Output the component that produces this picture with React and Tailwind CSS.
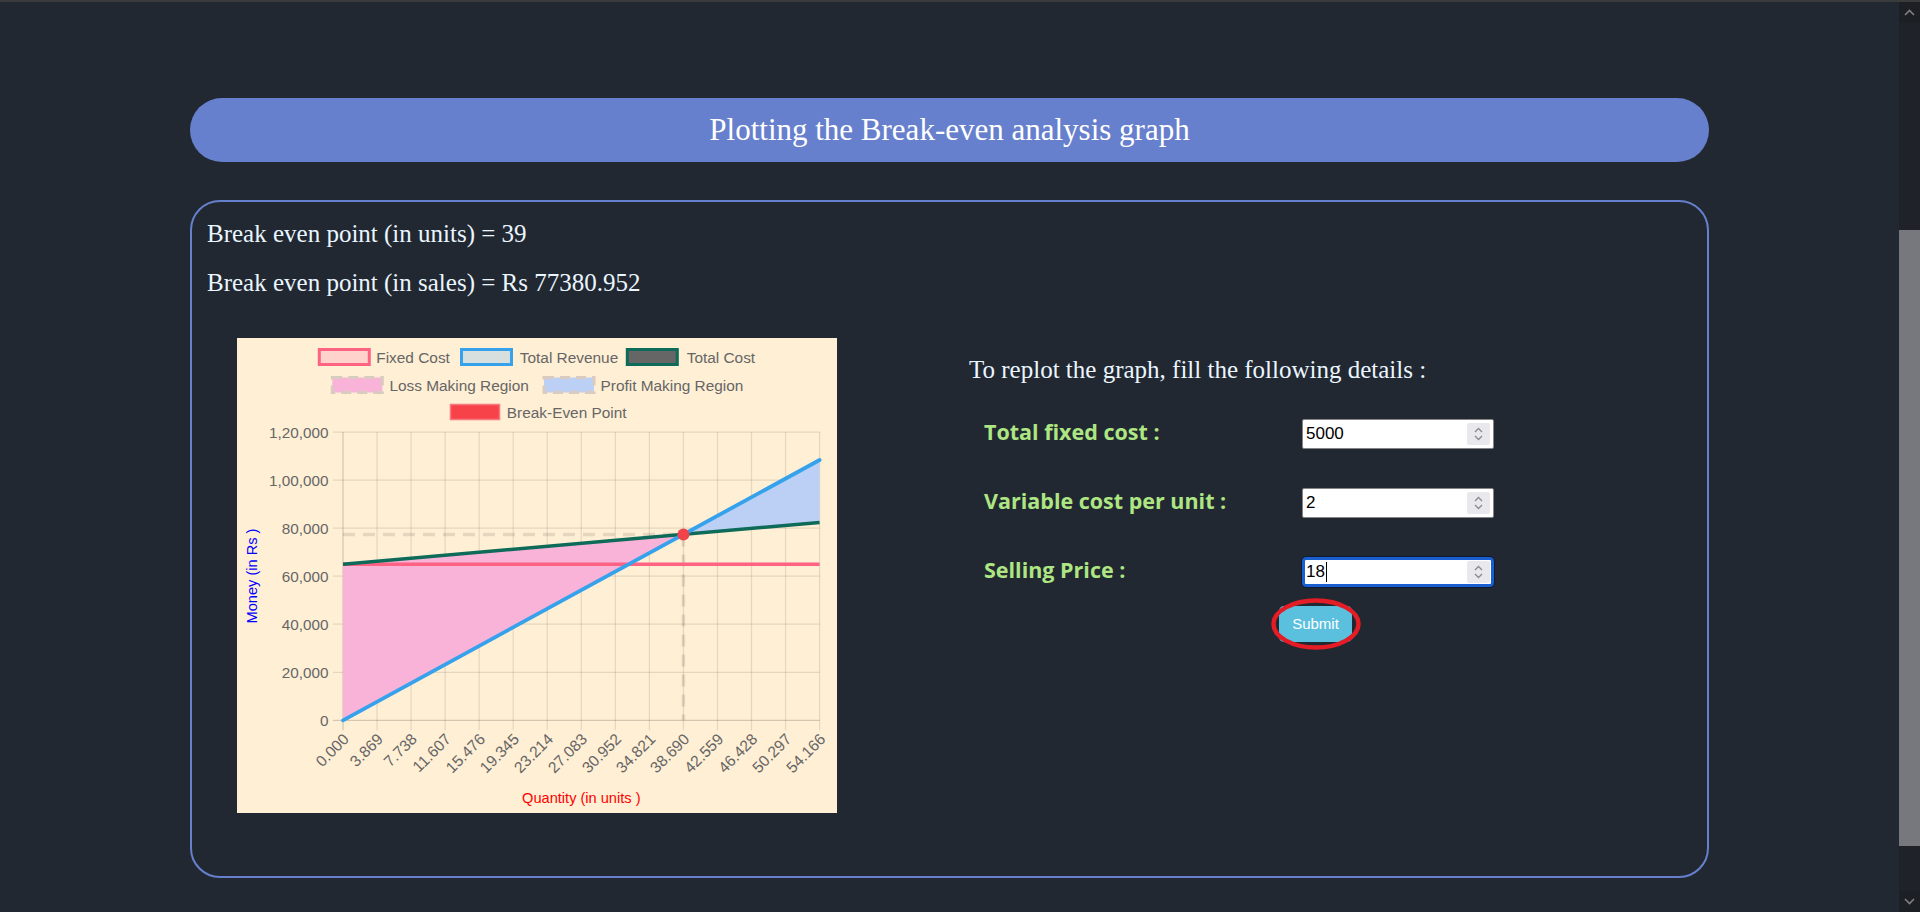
import React from "react";

const PL = 106, PR = 582.6, PT = 94, PB = 382.3;
const QMAX = 54.166;
const X = (q) => PL + (q / QMAX) * (PR - PL);
const Y = (v) => PB - (v / 120000) * (PB - PT);

const xLabels = ["0.000","3.869","7.738","11.607","15.476","19.345","23.214","27.083","30.952","34.821","38.690","42.559","46.428","50.297","54.166"];
const yLabels = ["0","20,000","40,000","60,000","80,000","1,00,000","1,20,000"];

const F = 65000, V = 320, P = 2000;
const BEPQ = 38.69, BEPS = 77380.952;
const TC = (q) => F + V * q;
const TR = (q) => P * q;

function Chart() {
  const font = "'Liberation Sans', Arial, sans-serif";
  const bx = X(BEPQ), by = Y(BEPS);
  return (
    <div className="w-[600px] h-[475px] bg-[#ffefd5] shrink-0">
      <svg width="600" height="475" viewBox="0 0 600 475" style={{ fontFamily: font }}>
        {/* legend row 1 */}
        <rect x="82.3" y="11.5" width="50" height="15" fill="#ffd3cc" stroke="#ff6384" strokeWidth="3" />
        <text x="139.3" y="19.5" fontSize="15.4" fill="#666" dominantBaseline="central">Fixed Cost</text>
        <rect x="224.5" y="11.5" width="50" height="15" fill="#d7e0de" stroke="#36a2eb" strokeWidth="3" />
        <text x="282.8" y="19.5" fontSize="15.4" fill="#666" dominantBaseline="central">Total Revenue</text>
        <rect x="390.3" y="11.5" width="50" height="15" fill="#666666" stroke="#0e6b59" strokeWidth="3" />
        <text x="449.7" y="19.5" fontSize="15.4" fill="#666" dominantBaseline="central">Total Cost</text>
        {/* legend row 2 */}
        <rect x="95.3" y="39.5" width="50" height="15" fill="#f9b3d8" stroke="#d9cbbf" strokeWidth="3" strokeDasharray="10 6" />
        <text x="152.4" y="47.5" fontSize="15.4" fill="#666" dominantBaseline="central">Loss Making Region</text>
        <rect x="307" y="39.5" width="50" height="15" fill="#bcd0f6" stroke="#d9cbbf" strokeWidth="3" strokeDasharray="10 6" />
        <text x="363.5" y="47.5" fontSize="15.4" fill="#666" dominantBaseline="central">Profit Making Region</text>
        {/* legend row 3 */}
        <rect x="213.5" y="66.5" width="49" height="15" fill="#f7424a" stroke="#f97a7e" strokeWidth="1.5" />
        <text x="269.8" y="74.2" fontSize="15.4" fill="#666" dominantBaseline="central">Break-Even Point</text>

        {/* grid horizontal */}
        {yLabels.map((l, i) => {
          const y = PB - (i * (PB - PT)) / 6;
          return (
            <g key={l}>
              <line x1={PL - 10} x2={PR} y1={y} y2={y} stroke={i === 0 ? "rgba(0,0,0,0.17)" : "rgba(0,0,0,0.1)"} strokeWidth="1.25" />
              <text x={PL - 14.5} y={y} fontSize="15.3" fill="#666" textAnchor="end" dominantBaseline="central">{l}</text>
            </g>
          );
        })}
        {/* grid vertical */}
        {xLabels.map((l, i) => {
          const x = PL + (i * (PR - PL)) / 14;
          return (
            <g key={l}>
              <line x1={x} x2={x} y1={PT} y2={PB + 10} stroke={i === 0 ? "rgba(0,0,0,0.17)" : "rgba(0,0,0,0.1)"} strokeWidth="1.25" />
              <text
                x={x + 3}
                y={PB + 16}
                fontSize="15.6"
                fill="#666"
                textAnchor="end"
                dominantBaseline="central"
                transform={`rotate(-45 ${x + 3} ${PB + 16})`}
              >
                {l}
              </text>
            </g>
          );
        })}

        {/* fills */}
        <polygon points={`${X(0)},${Y(TC(0))} ${bx},${by} ${X(0)},${Y(0)}`} fill="#f9b3d8" />
        <polygon points={`${bx},${by} ${X(QMAX)},${Y(TR(QMAX))} ${X(QMAX)},${Y(TC(QMAX))}`} fill="#bcd0f6" />

        {/* dashed guides */}
        <line x1={PL} x2={bx} y1={by} y2={by} stroke="rgba(0,0,0,0.1)" strokeWidth="3.5" strokeDasharray="12 8" />
        <line x1={bx} x2={bx} y1={by} y2={PB} stroke="rgba(0,0,0,0.1)" strokeWidth="3.5" strokeDasharray="12 8" />

        {/* lines */}
        <line x1={X(0)} x2={X(QMAX)} y1={Y(F)} y2={Y(F)} stroke="#ff6384" strokeWidth="3.5" />
        <line x1={X(0)} x2={X(QMAX)} y1={Y(TC(0))} y2={Y(TC(QMAX))} stroke="#0e6b59" strokeWidth="3.5" />
        <line x1={X(0)} x2={X(QMAX)} y1={Y(0)} y2={Y(TR(QMAX))} stroke="#36a2eb" strokeWidth="3.8" strokeLinecap="round" />

        {/* break even point */}
        <circle cx={bx} cy={by} r="6" fill="#f0434a" />

        {/* axis titles */}
        <text
          x="15"
          y="238"
          fontSize="14.6"
          fill="#0000ff"
          textAnchor="middle"
          dominantBaseline="central"
          transform="rotate(-90 15 238)"
        >
          Money (in Rs )
        </text>
        <text x="344.3" y="459.5" fontSize="14.6" fill="#ff0000" textAnchor="middle" dominantBaseline="central">
          Quantity (in units )
        </text>
      </svg>
    </div>
  );
}

function Spinner() {
  return (
    <div className="w-[23px] h-[22px] bg-[#e9e9ed] rounded-[2px] flex items-center justify-center">
      <svg width="11" height="16" viewBox="0 0 11 16">
        <path d="M2 6 L5.5 2.5 L9 6" fill="none" stroke="#8a8a8e" strokeWidth="1.3" />
        <path d="M2 10 L5.5 13.5 L9 10" fill="none" stroke="#8a8a8e" strokeWidth="1.3" />
      </svg>
    </div>
  );
}

function NumberBox({ value, focused }) {
  return (
    <div
      className={
        focused
          ? "w-[192px] h-[30px] bg-white rounded-[4px] border-[3px] border-[#1a5fd0] outline outline-1 outline-[#0e1b33] flex items-center pl-[1px] pr-[1px]"
          : "w-[192px] h-[30px] bg-white rounded-[2px] border border-[#858585] flex items-center pl-[3px] pr-[3px]"
      }
    >
      <div className="flex-1 flex items-center text-[17px] text-black" style={{ fontFamily: "'Liberation Sans', Arial, sans-serif" }}>
        <span>{value}</span>
        {focused && <span className="inline-block w-[1px] h-[20px] bg-black ml-[1px]" />}
      </div>
      <Spinner />
    </div>
  );
}

function Row({ label, value, focused, first }) {
  return (
    <div className={first ? "flex items-center h-[30px]" : "flex items-center h-[30px] mt-[39px]"}>
      <div
        className="w-[318px] mb-[4px] text-[21.5px] leading-[30px] font-bold text-[#ade683]"
        style={{ fontFamily: "'Open Sans', sans-serif" }}
      >
        {label}
      </div>
      <NumberBox value={value} focused={focused} />
    </div>
  );
}

export default function App() {
  const serif = { fontFamily: "'Liberation Serif', 'Times New Roman', serif" };
  return (
    <div className="w-[1920px] h-[912px] overflow-hidden bg-[#222831] flex flex-col">
      <div className="h-[2px] bg-[#3a3b3d] shrink-0" />
      <div className="flex flex-1 min-h-0">
        <div className="flex-1 px-[190px]">
          <div
            className="mt-[96px] h-[64px] rounded-full bg-[#6780cd] flex items-center justify-center text-white text-[31px]"
            style={serif}
          >
            Plotting the Break-even analysis graph
          </div>

          <div className="mt-[38px] h-[678px] border-2 border-[#6780cd] rounded-[30px] pt-[17px] px-[15px]" style={serif}>
            <p className="text-[25px] leading-[30px] text-[#eaf6ff]">Break even point (in units) = 39</p>
            <p className="mt-[19px] text-[25px] leading-[30px] text-[#eaf6ff]">Break even point (in sales) = Rs 77380.952</p>

            <div className="mt-[40px] pl-[30px] flex">
              <Chart />
              <div className="ml-[132px] pt-[17px]">
                <p className="text-[25px] leading-[30px] text-[#eaf6ff]">To replot the graph, fill the following details :</p>
                <div className="pl-[15px] mt-[34px]">
                  <Row first label="Total fixed cost :" value="5000" />
                  <Row label="Variable cost per unit :" value="2" />
                  <Row label="Selling Price :" value="18" focused />
                  <div className="mt-[19px] ml-[295px] relative w-[73px] h-[36px]">
                    <button
                      className="w-[73px] h-[36px] bg-[#5bc0de] rounded-[5px] text-white text-[15px]"
                      style={{ fontFamily: "'Liberation Sans', Arial, sans-serif" }}
                    >
                      Submit
                    </button>
                    <svg className="absolute left-[-8px] top-[-8px] pointer-events-none" width="90" height="52" viewBox="0 0 90 52">
                      <ellipse cx="45" cy="26" rx="42.5" ry="23.5" fill="none" stroke="#e31c25" strokeWidth="4.5" />
                    </svg>
                  </div>
                </div>
              </div>
            </div>
          </div>
        </div>

        {/* scrollbar */}
        <div className="w-[21px] bg-[#1f2228] flex flex-col shrink-0">
          <div className="h-[21px] flex items-center justify-center bg-[#1c1f24]">
            <svg width="11" height="7" viewBox="0 0 11 7"><path d="M1 6 L5.5 1.5 L10 6" fill="none" stroke="#7d7f84" strokeWidth="1.6" /></svg>
          </div>
          <div className="h-[207px]" />
          <div className="h-[616px] bg-[#76787e]" />
          <div className="flex-1" />
          <div className="h-[21px] flex items-center justify-center bg-[#1c1f24]">
            <svg width="11" height="7" viewBox="0 0 11 7"><path d="M1 1 L5.5 5.5 L10 1" fill="none" stroke="#7d7f84" strokeWidth="1.6" /></svg>
          </div>
        </div>
      </div>
    </div>
  );
}
